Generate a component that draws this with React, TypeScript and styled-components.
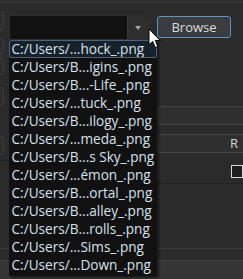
import * as React from "react"
import styled, { createGlobalStyle } from "styled-components"

const files = [
  "C:/Users/...hock_.png",
  "C:/Users/B...igins_.png",
  "C:/Users/B...-Life_.png",
  "C:/Users/...tuck_.png",
  "C:/Users/B...ilogy_.png",
  "C:/Users/...meda_.png",
  "C:/Users/B...s Sky_.png",
  "C:/Users/...émon_.png",
  "C:/Users/B...ortal_.png",
  "C:/Users/B...alley_.png",
  "C:/Users/B...rolls_.png",
  "C:/Users/...Sims_.png",
  "C:/Users/...Down_.png",
]

const leftStubs = [
  { top: 12, height: 19 },
  { top: 14, height: 16 },
  { top: 10, height: 17 },
  { top: 18, height: 19 },
  { top: 36, height: 19 },
]

const App = () => (
  <>
    <GlobalStyle />
    <Page>
      <TopBar />
      <Content>
        <LeftStrip>
          {leftStubs.map((s, i) => (
            <Stub key={i} $top={s.top} $height={s.height} />
          ))}
          <Divider />
        </LeftStrip>
        <ComboWrap>
          <Combo>
            <ComboField />
            <ComboArrow>
              <Triangle />
            </ComboArrow>
          </Combo>
          <Dropdown>
            {files.map((f, i) => (
              <Item key={i} $active={i === 0}>
                {f}
              </Item>
            ))}
          </Dropdown>
          <Cursor viewBox="0 0 13 21" width="13" height="21">
            <path
              d="M1 1 L1 17 L4.6 13.4 L7.2 19.5 L9.8 18.4 L7.3 12.4 L12.2 12.4 Z"
              fill="#fff"
              stroke="#000"
              strokeWidth="1"
              strokeLinejoin="round"
            />
          </Cursor>
        </ComboWrap>
        <RightCol>
          <BrowseButton>Browse</BrowseButton>
          <Field $top={68} />
          <Field $top={9}>R</Field>
          <CheckRow>
            <Check />
          </CheckRow>
          <Divider />
        </RightCol>
      </Content>
      <BottomLine />
      <BottomPanel />
    </Page>
  </>
)

export default App

const GlobalStyle = createGlobalStyle`
  html, body {
    margin: 0;
    padding: 0;
    background: #2b2b2b;
  }
  * {
    box-sizing: border-box;
  }
`

const Page = styled.div`
  width: 243px;
  height: 279px;
  overflow: hidden;
  background: #2b2b2b;
  display: flex;
  flex-direction: column;
  font-family: "Open Sans", "Noto Sans", sans-serif;
  position: relative;
`

const TopBar = styled.div`
  height: 5px;
  background: #313131;
  border-bottom: 1px solid #262626;
  flex-shrink: 0;
`

const Content = styled.div`
  display: flex;
  height: 243px;
  flex-shrink: 0;
`

const LeftStrip = styled.div`
  width: 9px;
  display: flex;
  flex-direction: column;
`

const Stub = styled.div<{ $top: number; $height: number }>`
  margin-top: ${(p) => p.$top - 6}px;
  margin-left: -6px;
  width: 10px;
  height: ${(p) => p.$height}px;
  background: #2e2e2e;
  border: 1px solid #3c3c3c;
  border-radius: 3px;
`

const Divider = styled.div`
  margin-top: 5px;
  height: 1px;
  background: #232323;
`

const ComboWrap = styled.div`
  width: 148px;
  margin-top: 10px;
  position: relative;
`

const Combo = styled.div`
  height: 25px;
  display: flex;
  background: #111;
  border: 1px solid #2f2f2f;
  border-radius: 2px;
`

const ComboField = styled.div`
  flex: 1;
`

const ComboArrow = styled.div`
  width: 21px;
  display: flex;
  align-items: center;
  justify-content: center;
  background: #2e2e2e;
  border-left: 1px solid #3a3a3a;
  border-radius: 0 2px 2px 0;
`

const Triangle = styled.div`
  width: 0;
  height: 0;
  border-left: 3.5px solid transparent;
  border-right: 3.5px solid transparent;
  border-top: 4px solid #a8a8a8;
`

const Dropdown = styled.div`
  position: absolute;
  left: 0;
  top: 25px;
  width: 148px;
  background: #111;
  padding: 0 0 2px;
  box-shadow: 2px 2px 2px rgba(0, 0, 0, 0.45);
  z-index: 2;
`

const Item = styled.div<{ $active: boolean }>`
  height: 18px;
  line-height: ${(p) => (p.$active ? 16 : 18)}px;
  padding-left: ${(p) => (p.$active ? 2 : 3)}px;
  font-size: 13.6px;
  color: #d6e2ee;
  white-space: nowrap;
  overflow: hidden;
  background: ${(p) => (p.$active ? "#17212b" : "transparent")};
  border: ${(p) => (p.$active ? "1px solid #4a6378" : "none")};
  border-radius: 2px;
`

const Cursor = styled.svg`
  position: absolute;
  left: 139px;
  top: 13px;
  z-index: 3;
`

const RightCol = styled.div`
  width: 86px;
  margin-left: 8px;
  display: flex;
  flex-direction: column;
`

const BrowseButton = styled.button`
  margin-top: 11px;
  width: 74px;
  height: 22px;
  padding: 0;
  background: #3a3c3f;
  border: 1px solid #5e93c4;
  border-radius: 3px;
  color: #dcdcdc;
  font-family: "Open Sans", "Noto Sans", sans-serif;
  font-size: 13px;
`

const Field = styled.div<{ $top: number }>`
  margin-top: ${(p) => p.$top}px;
  width: 100px;
  height: 19px;
  background: #2f2f2f;
  border: 1px solid #444;
  border-radius: 3px;
  color: #d6d6d6;
  font-size: 13px;
  line-height: 17px;
  padding-left: 72px;
`

const CheckRow = styled.div`
  margin-top: 12px;
  display: flex;
  padding-left: 74px;
`

const Check = styled.div`
  width: 13px;
  height: 13px;
  border: 1px solid #d8d8d8;
  background: #1e1e1e;
`

const BottomLine = styled.div`
  height: 1px;
  background: #3b3b3b;
  flex-shrink: 0;
`

const BottomPanel = styled.div`
  flex: 1;
  margin-top: 11px;
  background: #353535;
  border-top: 1px solid #3e3e3e;
`
